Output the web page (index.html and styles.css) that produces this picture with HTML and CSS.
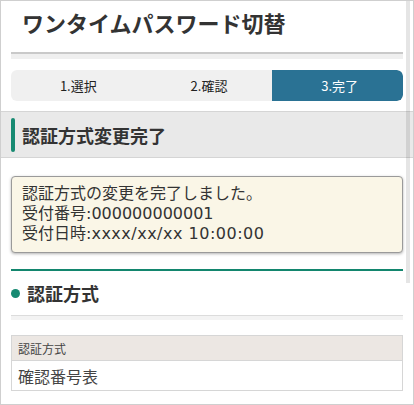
FILE: index.html
```html
<!DOCTYPE html>
<html lang="ja">
<head>
    <meta charset="UTF-8">
    <meta name="viewport" content="width=device-width, initial-scale=1.0">
    <title>ワンタイムパスワード切替</title>
    <link rel="stylesheet" href="styles.css">
</head>
<body>
    <div class="frame">
        <div class="page">
            <div class="page-header">
                <h1 class="page-title">ワンタイムパスワード切替</h1>
            </div>
            <div class="header-band"></div>

            <ol class="steps">
                <li class="step">1.選択</li>
                <li class="step">2.確認</li>
                <li class="step active">3.完了</li>
            </ol>

            <div class="section-head">
                <span class="accent"></span>
                <h2>認証方式変更完了</h2>
            </div>

            <div class="message">
                <p>認証方式の変更を完了しました。</p>
                <p>受付番号:000000000001</p>
                <p>受付日時:<span class="stamp">xxxx/xx/xx 10:00:00</span></p>
            </div>

            <div class="block">
                <h3 class="block-title"><span class="dot"></span>認証方式</h3>
            </div>

            <table class="info">
                <tr><th>認証方式</th></tr>
                <tr><td>確認番号表</td></tr>
            </table>
        </div>
        <div class="scroll-thumb"></div>
    </div>
</body>
</html>
```

FILE: styles.css
```css
* {
    box-sizing: border-box;
}

body {
    margin: 0;
    font-family: "Noto Sans CJK JP", "Noto Sans", sans-serif;
    color: #333;
    background: #fff;
}

.frame {
    position: relative;
    height: 405px;
    border: 1px solid #cfcfcf;
    overflow: hidden;
}

.page {
    padding: 0 10px;
}

.page-header {
    border-bottom: 2px solid #c9c9c9;
    height: 53px;
    padding: 6px 11px 0;
}

.page-title {
    margin: 0;
    font-size: 22px;
    line-height: 30px;
    font-weight: bold;
    color: #333;
}

.header-band {
    height: 5px;
    background: #efefef;
}

.steps {
    list-style: none;
    margin: 11px 0 0;
    padding: 0;
    display: grid;
    grid-template-columns: 1fr 1fr 1fr;
    height: 31px;
    background: #f0f0f0;
    border-radius: 6px;
    overflow: hidden;
}

.step {
    display: flex;
    align-items: center;
    justify-content: center;
    font-size: 13px;
    color: #222;
    padding-left: 4px;
}

.step.active {
    background: #2a7294;
    color: #fff;
    border-radius: 0 6px 6px 0;
}

.section-head {
    margin: 10px -10px 0;
    height: 47px;
    background: #e9e9e9;
    border-top: 1px solid #d5d5d5;
    border-bottom: 1px solid #d5d5d5;
    display: flex;
    align-items: center;
    padding-left: 10px;
}

.section-head .accent {
    width: 4px;
    height: 34px;
    border-radius: 2px;
    background: #178a72;
    margin-right: 7px;
}

.section-head h2 {
    margin: 0;
    font-size: 18px;
    font-weight: bold;
    color: #333;
}

.message {
    margin-top: 18px;
    background: #faf6e7;
    border: 1px solid #9a9a9a;
    border-radius: 4px;
    box-shadow: 0 1px 3px rgba(0, 0, 0, 0.3);
    padding: 7px 10px 8px;
    font-family: "DejaVu Sans", "Noto Sans CJK JP", sans-serif;
    color: #333;
}

.message p {
    margin: 0;
    height: 20px;
    line-height: 20px;
    font-size: 16px;
}

.stamp {
    letter-spacing: 0.5px;
}

.block {
    margin-top: 16px;
    border-top: 2px solid #13866e;
}

.block-title {
    margin: 0;
    height: 45px;
    display: flex;
    align-items: center;
    font-size: 18px;
    font-weight: bold;
    color: #333;
    border-bottom: 1px solid #dcdcdc;
}

.dot {
    width: 9px;
    height: 9px;
    border-radius: 50%;
    background: #178a72;
    margin-right: 7px;
}

.block::after {
    content: "";
    display: block;
    height: 4px;
    background: #f3f3f3;
}

.info {
    margin-top: 15px;
    width: 100%;
    border-collapse: collapse;
    border: 1px solid #d6d6d6;
}

.info th {
    text-align: left;
    font-weight: normal;
    font-size: 12px;
    color: #444;
    background: #ece7e3;
    height: 25px;
    padding: 0 6px;
    border-bottom: 1px solid #d6d6d6;
}

.info td {
    font-size: 16px;
    color: #444;
    height: 30px;
    padding: 0 6px;
}

.scroll-thumb {
    position: absolute;
    top: 0;
    right: 3px;
    width: 4px;
    height: 282px;
    background: rgba(0, 0, 0, 0.1);
}
```
